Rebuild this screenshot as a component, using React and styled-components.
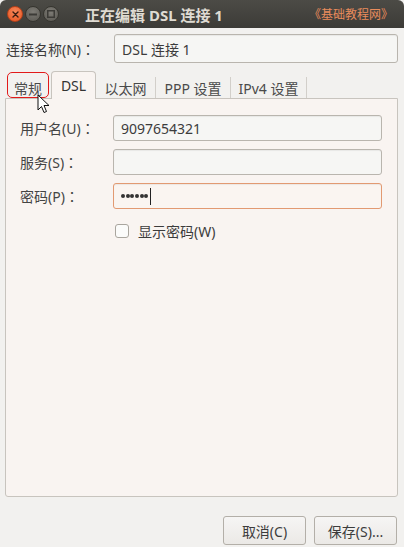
import React from "react";
import styled, { createGlobalStyle } from "styled-components";

const Global = createGlobalStyle`
  html, body { margin: 0; padding: 0; background: #f2f1ef; }
  body { font-family: "Noto Sans", "Noto Sans CJK SC", sans-serif; font-size: 14px; color: #3c3c3c; }
  * { box-sizing: border-box; }
`;

const Win = styled.div`
  width: 404px;
  height: 547px;
  display: flex;
  flex-direction: column;
  background: #f2f1ef;
  position: relative;
  overflow: hidden;
`;

const TitleBar = styled.div`
  height: 28px;
  flex: none;
  display: flex;
  align-items: center;
  padding-left: 7px;
  padding-right: 11px;
  background: linear-gradient(#4c4b46, #3c3b37);
  border-radius: 6px 6px 0 0;
`;

const WinBtn = styled.div`
  width: 16px;
  height: 16px;
  border-radius: 50%;
  margin-right: 2px;
  display: flex;
  align-items: center;
  justify-content: center;
  background: ${p => (p.$close ? "radial-gradient(circle at 50% 35%, #f7875a, #e9541f)" : "radial-gradient(circle at 50% 35%, #7d7b75, #595751)")};
  border: 1px solid ${p => (p.$close ? "#b5411a" : "#36352f")};
`;

const Title = styled.div`
  margin-left: 24px;
  font-weight: bold;
  font-size: 15px;
  color: #dfdbd2;
  flex: 1;
`;

const Mark = styled.div`
  color: #e98c5c;
  font-size: 12px;
`;

const Colon = styled.span`
  font-family: "Noto Sans CJK TC", sans-serif;
`;

const Body = styled.div`
  flex: 1;
  display: flex;
  flex-direction: column;
  padding: 6px 6px 2px 5px;
`;

const NameRow = styled.div`
  display: flex;
  align-items: center;
  height: 29px;
`;

const NameLabel = styled.div`
  width: 109px;
  padding-left: 1px;
  white-space: nowrap;
`;

const Input = styled.div`
  height: ${p => p.$h || 26}px;
  flex: 1;
  border: 1px solid ${p => (p.$focus ? "#e29a72" : "#b9b5ae")};
  border-radius: 3px;
  background: ${p => (p.$focus ? "#faf5f1" : "#f6f6f4")};
  box-shadow: inset 0 1px 1px rgba(0,0,0,0.06);
  display: flex;
  align-items: center;
  padding-left: 7px;
  color: #3c3c3c;
`;

const TabStrip = styled.div`
  margin-top: 8px;
  height: 27px;
  display: flex;
  align-items: flex-end;
  position: relative;
  z-index: 1;
`;

const Tab = styled.div`
  height: ${p => (p.$active ? 28 : 21)}px;
  display: flex;
  align-items: center;
  justify-content: center;
  width: ${p => p.$w}px;
  white-space: nowrap;
  color: ${p => (p.$active ? "#333" : "#4a4a4a")};
  background: ${p => (p.$active ? "#f9f4f1" : "transparent")};
  border: ${p => (p.$active ? "1px solid #c8c4be" : "none")};
  border-bottom: none;
  border-radius: ${p => (p.$active ? "4px 4px 0 0" : "0")};
  border-right: ${p => (p.$sep ? "1px solid #d2cfca" : p.$active ? "1px solid #c8c4be" : "none")};
  margin-bottom: ${p => (p.$active ? -1 : 0)}px;
  padding-top: ${p => (p.$active ? 0 : 1)}px;
  position: relative;
`;

const Highlight = styled.div`
  position: absolute;
  left: 2px;
  top: -5px;
  width: 42px;
  height: 26px;
  border: 1.5px solid #e21a1a;
  border-radius: 5px;
`;

const Panel = styled.div`
  height: 399px;
  border: 1px solid #c8c4be;
  border-radius: 0 0 3px 3px;
  background: #f9f4f1;
  padding: 16px 15px 0 14px;
  display: flex;
  flex-direction: column;
  gap: 8px;
  width: 393px;
`;

const FieldRow = styled.div`
  display: flex;
  align-items: center;
`;

const FieldLabel = styled.div`
  width: 93px;
  color: #444;
  white-space: nowrap;
`;

const Dot = styled.span`
  width: 4px;
  height: 4px;
  border-radius: 50%;
  background: #333;
  margin-right: 0.7px;
`;

const Caret = styled.span`
  display: inline-block;
  width: 1px;
  height: 17px;
  background: #222;
  margin-left: 1px;
`;

const CheckRow = styled.div`
  display: flex;
  align-items: center;
  padding-left: 95px;
  margin-top: 4px;
`;

const Box = styled.div`
  width: 14px;
  height: 14px;
  border: 1px solid #a9a59e;
  border-radius: 3px;
  background: #fbfbfa;
  margin-right: 9px;
`;

const ButtonRow = styled.div`
  margin-top: 19px;
  display: flex;
  justify-content: flex-end;
  gap: 8px;
  padding-right: 1px;
`;

const Button = styled.div`
  width: 83px;
  height: 29px;
  border: 1px solid #b3afa8;
  border-radius: 3px;
  background: linear-gradient(#f6f5f4, #ebe9e6);
  display: flex;
  align-items: center;
  justify-content: center;
  color: #3c3c3c;
`;

const Cursor = styled.svg`
  position: absolute;
  left: 37px;
  top: 94px;
  z-index: 5;
`;

export default function App() {
  return (
    <>
      <Global />
      <Win>
        <TitleBar>
          <WinBtn $close>
            <svg width="7" height="7" viewBox="0 0 7 7">
              <path d="M1 1L6 6M6 1L1 6" stroke="#3a1c10" strokeWidth="1.4" strokeLinecap="round" />
            </svg>
          </WinBtn>
          <WinBtn>
            <svg width="8" height="3" viewBox="0 0 8 3">
              <rect x="0" y="0.5" width="8" height="2" fill="#3c3b37" />
            </svg>
          </WinBtn>
          <WinBtn>
            <svg width="8" height="8" viewBox="0 0 8 8">
              <rect x="0.75" y="0.75" width="6.5" height="6.5" fill="none" stroke="#3c3b37" strokeWidth="1.5" />
            </svg>
          </WinBtn>
          <Title>正在编辑 DSL 连接 1</Title>
          <Mark>《基础教程网》</Mark>
        </TitleBar>
        <Body>
          <NameRow>
            <NameLabel>连接名称(N)<Colon>：</Colon></NameLabel>
            <Input $h={29}>DSL 连接 1</Input>
          </NameRow>
          <TabStrip>
            <Tab $w={46}>
              常规
              <Highlight />
            </Tab>
            <Tab $active $w={45}>DSL</Tab>
            <Tab $sep $w={60}>以太网</Tab>
            <Tab $sep $w={75}>PPP 设置</Tab>
            <Tab $sep $w={76}>IPv4 设置</Tab>
          </TabStrip>
          <Panel>
            <FieldRow>
              <FieldLabel>用户名(U)<Colon>：</Colon></FieldLabel>
              <Input>9097654321</Input>
            </FieldRow>
            <FieldRow>
              <FieldLabel>服务(S)<Colon>：</Colon></FieldLabel>
              <Input></Input>
            </FieldRow>
            <FieldRow>
              <FieldLabel>密码(P)<Colon>：</Colon></FieldLabel>
              <Input $focus>
                <Dot /><Dot /><Dot /><Dot /><Dot /><Dot />
                <Caret />
              </Input>
            </FieldRow>
            <CheckRow>
              <Box />
              <span>显示密码(W)</span>
            </CheckRow>
          </Panel>
          <ButtonRow>
            <Button>取消(C)</Button>
            <Button>保存(S)...</Button>
          </ButtonRow>
        </Body>
        <Cursor width="14" height="20" viewBox="0 0 14 20">
          <path d="M1 1 L1 16 L4.5 12.5 L7 18.5 L9.5 17.5 L7 11.5 L12 11.5 Z" fill="#fff" stroke="#111" strokeWidth="1" strokeLinejoin="round" />
        </Cursor>
      </Win>
    </>
  );
}
